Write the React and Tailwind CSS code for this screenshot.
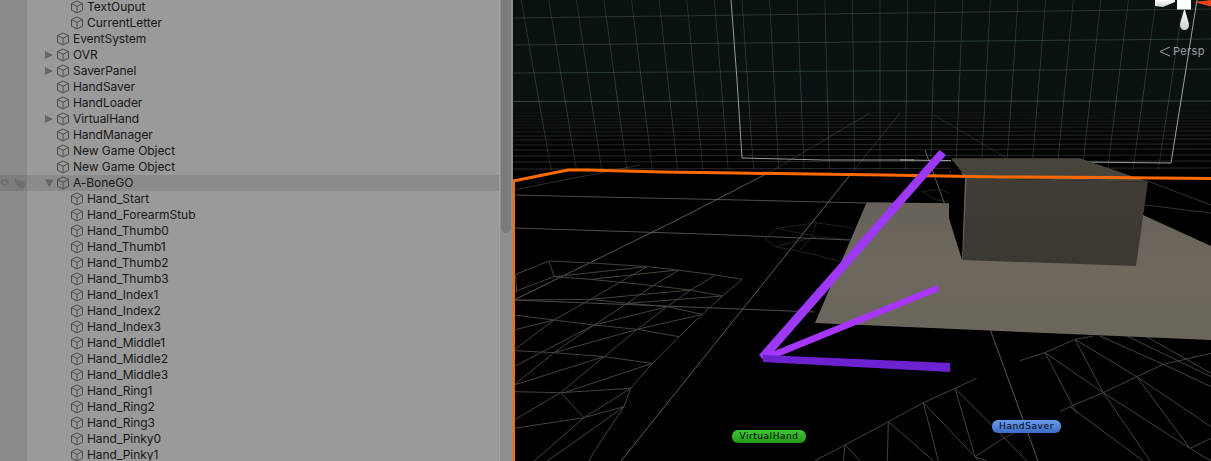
import React from "react";

const rows = [
  ["TextOuput", 1], ["CurrentLetter", 1], ["EventSystem", 0], ["OVR", 0, "r"], ["SaverPanel", 0, "r"],
  ["HandSaver", 0], ["HandLoader", 0], ["VirtualHand", 0, "r"], ["HandManager", 0],
  ["New Game Object", 0], ["New Game Object", 0], ["A-BoneGO", 0, "d", true],
  ["Hand_Start", 1], ["Hand_ForearmStub", 1], ["Hand_Thumb0", 1], ["Hand_Thumb1", 1], ["Hand_Thumb2", 1], ["Hand_Thumb3", 1],
  ["Hand_Index1", 1], ["Hand_Index2", 1], ["Hand_Index3", 1], ["Hand_Middle1", 1], ["Hand_Middle2", 1], ["Hand_Middle3", 1],
  ["Hand_Ring1", 1], ["Hand_Ring2", 1], ["Hand_Ring3", 1], ["Hand_Pinky0", 1], ["Hand_Pinky1", 1],
];

function Cube() {
  return (
    <svg width="14" height="14" viewBox="0 0 14 14" fill="none" stroke="#4c4c4c" strokeWidth="1" className="shrink-0">
      <path d="M7 1 L12.5 3.6 V10.2 L7 13 L1.5 10.2 V3.6 Z" strokeLinejoin="round" />
      <path d="M1.5 3.6 L7 6.4 L12.5 3.6 M7 6.4 V13" />
    </svg>
  );
}

function Arrow({ kind }) {
  if (!kind) return <span className="w-[12px] shrink-0" />;
  return (
    <span className="w-[12px] shrink-0 flex items-center">
      <svg width="10" height="10" viewBox="0 0 10 10" fill="#666666">
        {kind === "r" ? <path d="M1 1 L9 5 L1 9 Z" /> : <path d="M1 1.5 H9.5 L5.2 9.5 Z" />}
      </svg>
    </span>
  );
}

function Row({ name, depth, arrow, selected }) {
  return (
    <div className={`flex h-4 shrink-0 ${selected ? "bg-[#8b8b8b]" : ""}`}>
      <div className={`w-[27px] shrink-0 flex items-center ${selected ? "bg-[#7d7d7d]" : "bg-[#8a8a8a]"}`}>
        {selected && (
          <svg width="27" height="12" viewBox="0 0 27 12" fill="#6e6e6e">
            <path d="M-0.5 5.5 Q4.5 -1 9.5 5.5 Q4.5 12 -0.5 5.5 Z M4.5 3.5 A2 2 0 1 0 4.5 7.5 A2 2 0 1 0 4.5 3.5 Z" fillRule="evenodd" />
            <path d="M14 2 L16 1.5 L18 5 L18.5 2.5 L20 3 L20.5 4 L22 4 L24.5 5 L25 8 L23.5 11 L19 11 L17.5 8 L15 5 Z" />
          </svg>
        )}
      </div>
      <div className={`flex items-center ${depth ? "pl-[43px]" : "pl-[17px]"}`}>
        {depth ? null : <Arrow kind={arrow} />}
        <Cube />
        <span className="ml-[3px] text-[12px] leading-4 text-[#171717] whitespace-nowrap [font-family:Inter,sans-serif] tracking-[-0.05px]">{name}</span>
      </div>
    </div>
  );
}

const G = ({ d, x, y, stroke = "#45433a", w = 1, op = 1 }) => (
  <g transform={`translate(${x} ${y}) scale(${1 / 3})`} fill="none" stroke={stroke} opacity={op} strokeLinejoin="round">
    {d.map((p, i) => (
      <polyline key={i} points={p} strokeWidth={w} vectorEffect="non-scaling-stroke" />
    ))}
  </g>
);

const leftPatch = [
  "0,165 105,123 250,130 400,140 490,150 605,165 685,178 625,228 565,283 495,350 415,430 350,505 330,560 240,695 225,723",
  "0,215 120,170 230,178 400,195 530,210 625,228",
  "0,240 230,238 340,250 460,260 565,283",
  "0,285 120,300 240,315 370,328 495,350",
  "0,392 120,398 270,410 415,430",
  "0,515 140,518 350,505",
  "0,625 210,593 330,560",
  "0,495 120,398 240,315 340,250 420,195 495,150",
  "0,390 120,300 230,238 320,185 400,140",
  "140,518 270,410 370,328 460,260 530,210 605,165",
  "0,600 140,518",
  "140,518 210,593",
  "60,723 210,593 350,505",
  "100,723 330,560",
  "105,123 120,170",
  "5,165 8,220",
  "0,330 120,300",
  "0,440 240,315",
  "0,495 270,410",
  "150,518 415,430",
  "120,398 370,328",
  "240,315 460,260",
  "370,328 565,283",
  "230,238 530,210",
  "340,250 625,228",
  "120,170 400,140",
  "230,178 490,150",
];

const smallPatch = [
  "75,297 110,265 230,248 340,265",
  "75,297 105,320 230,345 300,365",
  "110,265 230,290 340,300",
  "230,248 215,290 180,330",
  "105,320 230,290",
  "545,155 600,148 630,160",
  "545,155 590,180 625,185",
];

const lowerPatch = [
  "45,392 135,345 265,275 370,218 465,175 530,145",
  "135,345 180,392",
  "135,345 130,392",
  "265,275 262,392",
  "370,218 415,392",
  "465,175 525,380 535,392",
  "265,275 400,392",
  "370,218 525,380 560,393",
  "465,175 610,320 680,393",
  "525,380 610,325 640,310",
];

const rightPatch = [
  "660,92 735,68 825,28 880,18",
  "735,68 830,250",
  "735,68 910,188 1050,393",
  "825,28 910,188",
  "825,28 1010,140 1170,355 1233,393",
  "780,245 810,230 910,188 1010,140 1090,103 1233,70",
  "900,18 1090,103 1233,170",
  "980,18 1233,140",
  "810,230 1030,393",
  "910,188 1170,355",
  "1010,140 1233,290",
  "1170,355 1233,325",
  "1040,20 1233,130",
];

const floorY = [112, 115, 118, 121, 124, 127, 131, 135, 139, 144, 149, 155, 161, 168];
const wallK = [-13, -12, -11, -10, -9, -8, -7, -6, -5, -4, -3, -2, -1, 0, 1, 2, 3, 4, 5, 6, 7, 8, 9, 10, 11];

function Scene() {
  return (
    <svg viewBox="513 0 698 461" className="block w-full h-full">
      <defs>
        <linearGradient id="sky" x1="0" y1="0" x2="0" y2="1">
          <stop offset="0" stopColor="#091211" />
          <stop offset="0.55" stopColor="#0a1312" />
          <stop offset="0.64" stopColor="#090e0b" />
          <stop offset="0.8" stopColor="#040505" />
          <stop offset="1" stopColor="#000000" />
        </linearGradient>
        <linearGradient id="wall" x1="0" y1="0" x2="0" y2="170" gradientUnits="userSpaceOnUse">
          <stop offset="0" stopColor="#4d6f7a" stopOpacity="0.36" />
          <stop offset="0.6" stopColor="#5f8490" stopOpacity="0.42" />
          <stop offset="1" stopColor="#5f8490" stopOpacity="0.3" />
        </linearGradient>
        <linearGradient id="ground" x1="0" y1="0" x2="0" y2="1">
          <stop offset="0" stopColor="#646058" />
          <stop offset="0.6" stopColor="#6e685d" />
          <stop offset="1" stopColor="#6a665b" />
        </linearGradient>
        <linearGradient id="boxfront" x1="0" y1="0" x2="0" y2="1">
          <stop offset="0" stopColor="#403d36" />
          <stop offset="1" stopColor="#3a3831" />
        </linearGradient>
        <linearGradient id="cone" x1="0" y1="0" x2="0" y2="1">
          <stop offset="0" stopColor="#ffffff" />
          <stop offset="1" stopColor="#cfcfcf" />
        </linearGradient>
      </defs>
      <rect x="513" y="0" width="698" height="461" fill="#000000" />
      <rect x="513" y="0" width="698" height="175" fill="url(#sky)" />

      {wallK.map((k) => {
        const t = 880 + k * 27.6;
        const b = 880 + k * 25.3;
        return <polygon key={k} points={`${t - 0.4},0 ${t + 0.4},0 ${b + 0.4},170 ${b - 0.4},170`} fill="url(#wall)" />;
      })}
      <line x1="513" y1="18" x2="1211" y2="9" stroke="#7a9aa0" strokeOpacity="0.25" />
      <line x1="513" y1="45" x2="1211" y2="39" stroke="#7a9aa0" strokeOpacity="0.27" />
      <line x1="513" y1="73" x2="1211" y2="69" stroke="#7a9aa0" strokeOpacity="0.27" />
      <line x1="513" y1="101.5" x2="1211" y2="101" stroke="#7a9aa0" strokeOpacity="0.38" />

      {floorY.map((y, i) => (
        <line key={y} x1="513" y1={y + 1} x2="1211" y2={y} stroke="#8a8a8a" strokeOpacity={0.08 + i * 0.018} />
      ))}
      <line x1="934" y1="115" x2="1010" y2="160" stroke="#777" strokeOpacity="0.25" />
      <line x1="925" y1="150" x2="1038" y2="461" stroke="#6e6e6e" strokeOpacity="0.8" />
      <line x1="900" y1="113" x2="850" y2="175" stroke="#6e6e6e" strokeOpacity="0.35" />
      <line x1="850" y1="175" x2="621" y2="461" stroke="#6e6e6e" strokeOpacity="0.85" />
      <polyline points="870,113 770,172" fill="none" stroke="#6e6e6e" strokeOpacity="0.35" />
      <polyline points="770,172 677,220 514,300" fill="none" stroke="#6e6e6e" strokeOpacity="0.8" />
      <polyline points="513,190 600,173 640,165" fill="none" stroke="#6e6e6e" strokeOpacity="0.4" />
      <polyline points="513,195 600,197 740,200 866,203" fill="none" stroke="#6e6e6e" strokeOpacity="0.7" />
      <polyline points="514,228 704,234 850,240" fill="none" stroke="#6e6e6e" strokeOpacity="0.7" />
      <polyline points="514,300 814,312" fill="none" stroke="#6e6e6e" strokeOpacity="0.7" />
      <polyline points="1145,180 1211,205" fill="none" stroke="#666" strokeOpacity="0.5" />
      <polyline points="1145,205 1211,213" fill="none" stroke="#666" strokeOpacity="0.5" />

      <G x={514} y={220} d={leftPatch} />
      <G x={740} y={140} d={smallPatch} op={0.5} />
      <G x={800} y={330} d={lowerPatch} />
      <G x={800} y={330} d={rightPatch} />

      <polyline points="731,0 737,80 742,158 824,160 914,160" fill="none" stroke="#999999" />
      <polyline points="900,160 1171,163 1197,0" fill="none" stroke="#a0a0a0" />

      <polygon points="866.7,202.3 950,203.3 950,170 1143,215 1211,246 1211,340 815,323" fill="url(#ground)" />
      <polygon points="951,158.3 965,178.3 962,260 949,218.3 949,203" fill="#000000" />
      <polygon points="951,158.3 1080,158.3 1148,181.7 966.7,178.3" fill="#47443c" />
      <polygon points="966.7,178.3 1148,181.7 1136,266 962.7,260" fill="url(#boxfront)" />

      <polyline points="513,181 568,170 587,170 662,172 736,173 810,174 886,175 1000,177 1105,177.5 1211,178.5" fill="none" stroke="#ff6a00" strokeWidth="3" />
      <rect x="513" y="180" width="2" height="281" fill="#ff6a00" />

      <polygon points="759,355 939.5,150 946,155 765,362" fill="#9d38f5" />
      <polygon points="762,356 937,285 939,291 765,362" fill="#a836ff" />
      <polygon points="763,355 950,363 950,372 763,362" fill="#6d22d2" />

      <polygon points="1155,0 1175,0 1175,2 1163,7 1155,6" fill="url(#cone)" />
      <rect x="1177" y="0" width="14" height="9.5" fill="#ffffff" />
      <path d="M1184 10 H1185 L1189 24 Q1189 30 1184.5 30 Q1180 30 1180 24 Z" fill="url(#cone)" />
      <polygon points="1194,2 1211,0 1211,6.5" fill="#f0421c" />
      <polyline points="1170,47 1160,51.5 1170,56" fill="none" stroke="#a0a4a4" />
    </svg>
  );
}

export default function App() {
  return (
    <div className="flex h-[461px] w-[1211px] overflow-hidden bg-[#9a9a9a]">
      <div className="flex flex-col w-[499px] shrink-0 -mt-px">
        {rows.map(([name, depth, arrow, selected], i) => (
          <Row key={i} name={name} depth={depth} arrow={arrow} selected={selected} />
        ))}
      </div>
      <div className="w-[14px] shrink-0 bg-[#8f8f8f] flex flex-col border-l border-[#a3a3a3] pl-px pr-[2px]">
        <div className="h-[237px] -mt-1 rounded-b-[6px] bg-[#7b7b7b]" />
      </div>
      <div className="relative flex-1 min-w-0">
        <Scene />
        <span className="absolute left-[660px] top-[44px] text-[11px] leading-[14px] tracking-[0.35px] text-[#9ba0a0] [font-family:Inter,sans-serif]">Persp</span>
        <span className="absolute left-[219px] top-[430px] w-[74px] h-[13px] rounded-[6px] bg-gradient-to-b from-[#3fc935] to-[#1f9a16] text-black text-[9px] leading-[13px] text-center tracking-[0.55px] [font-family:'DejaVu_Sans',sans-serif]">VirtualHand</span>
        <span className="absolute left-[479px] top-[420px] w-[69px] h-[13px] rounded-[6px] bg-gradient-to-b from-[#6a9bee] to-[#3a6dc4] text-black text-[9px] leading-[13px] text-center tracking-[0.6px] [font-family:'DejaVu_Sans',sans-serif]">HandSaver</span>
      </div>
    </div>
  );
}
